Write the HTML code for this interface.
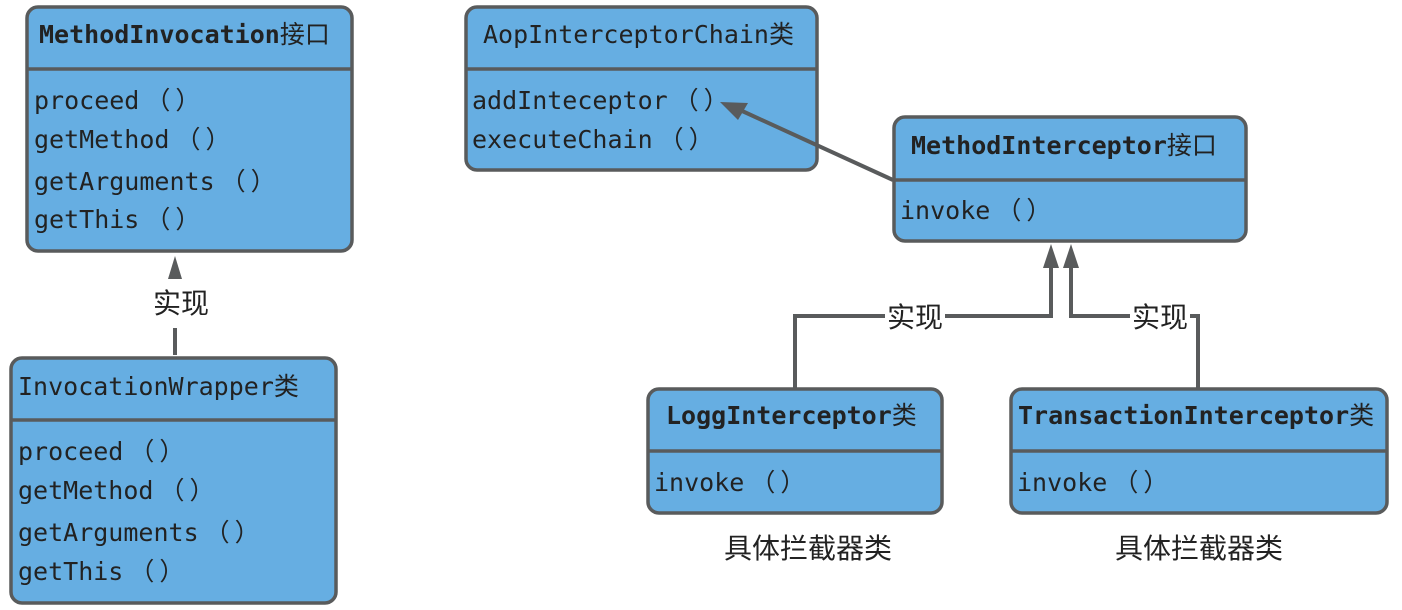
<!DOCTYPE html>
<html><head><meta charset="utf-8"><style>
html,body{margin:0;padding:0;background:#fff;width:1402px;height:610px;overflow:hidden}
svg text{font-family:"DejaVu Sans Mono","Noto Sans CJK SC",monospace;font-size:25px;fill:#222}
.b{font-weight:bold}
.c{font-family:"Noto Sans CJK SC",sans-serif;font-weight:normal}
.p{font-family:"Noto Sans CJK SC",sans-serif;font-weight:normal;letter-spacing:5px}
.cn{font-family:"Noto Sans CJK SC",sans-serif;font-size:28px;fill:#222}
</style></head><body>
<svg width="1402" height="610" xmlns="http://www.w3.org/2000/svg">
<g fill="#66aee2" stroke="#595b5c" stroke-width="3.5">
<rect x="27" y="7" width="325" height="244" rx="11"/>
<rect x="466" y="7" width="351" height="163" rx="11"/>
<rect x="894" y="117" width="352" height="124" rx="11"/>
<rect x="11" y="358" width="325" height="245" rx="11"/>
<rect x="648" y="389" width="294" height="124" rx="11"/>
<rect x="1011" y="389" width="376" height="124" rx="11"/>
</g>
<g stroke="#595b5c" stroke-width="3.5">
<line x1="27" y1="69" x2="352" y2="69"/>
<line x1="466" y1="69" x2="817" y2="69"/>
<line x1="894" y1="180" x2="1246" y2="180"/>
<line x1="11" y1="420" x2="336" y2="420"/>
<line x1="648" y1="451" x2="942" y2="451"/>
<line x1="1011" y1="451" x2="1387" y2="451"/>
</g>
<g stroke="#595b5c" stroke-width="4" fill="none">
<line x1="893" y1="180" x2="740" y2="110"/>
<line x1="175" y1="355" x2="175" y2="328"/>
<polyline points="795,388 795,316 1051,316 1051,262"/>
<polyline points="1198,388 1198,316 1071,316 1071,262"/>
</g>
<g fill="#595b5c">
<polygon points="720,102 748,103 738,120"/>
<polygon points="175,256 168,279 182,279"/>
<polygon points="1051,244 1043,268 1059,268"/>
<polygon points="1071,244 1063,268 1079,268"/>
</g>
<rect x="885" y="298" width="60" height="36" fill="#fff"/>
<rect x="1130" y="298" width="60" height="36" fill="#fff"/>
<text class="cn" x="153" y="313">实现</text>
<text class="cn" x="887" y="327">实现</text>
<text class="cn" x="1132" y="327">实现</text>
<text class="cn" x="724" y="558">具体拦截器类</text>
<text class="cn" x="1115" y="558">具体拦截器类</text>

<text class="b" x="39" y="43">MethodInvocation<tspan class="c">接口</tspan></text>
<text x="34" y="109">proceed<tspan class="p" dx="6">（）</tspan></text>
<text x="34" y="148">getMethod<tspan class="p" dx="6">（）</tspan></text>
<text x="34" y="190">getArguments<tspan class="p" dx="6">（）</tspan></text>
<text x="34" y="228">getThis<tspan class="p" dx="6">（）</tspan></text>

<text x="483" y="43">AopInterceptorChain<tspan class="c">类</tspan></text>
<text x="472" y="109">addInteceptor<tspan class="p" dx="6">（）</tspan></text>
<text x="472" y="148">executeChain<tspan class="p" dx="6">（）</tspan></text>

<text class="b" x="911" y="154">MethodInterceptor<tspan class="c">接口</tspan></text>
<text x="900" y="219">invoke<tspan class="p" dx="6">（）</tspan></text>

<text x="18" y="395">InvocationWrapper<tspan class="c">类</tspan></text>
<text x="18" y="460">proceed<tspan class="p" dx="6">（）</tspan></text>
<text x="18" y="499">getMethod<tspan class="p" dx="6">（）</tspan></text>
<text x="18" y="541">getArguments<tspan class="p" dx="6">（）</tspan></text>
<text x="18" y="580">getThis<tspan class="p" dx="6">（）</tspan></text>

<text class="b" x="666" y="424">LoggInterceptor<tspan class="c">类</tspan></text>
<text x="654" y="491">invoke<tspan class="p" dx="6">（）</tspan></text>

<text class="b" x="1018" y="424">TransactionInterceptor<tspan class="c">类</tspan></text>
<text x="1017" y="491">invoke<tspan class="p" dx="6">（）</tspan></text>
</svg>
</body></html>
